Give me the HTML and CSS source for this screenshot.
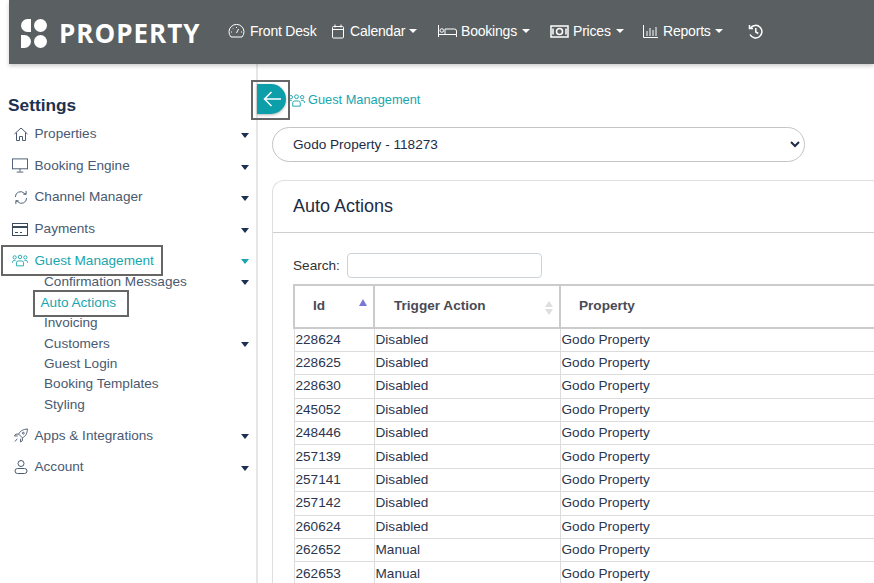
FILE: index.html
```html
<!DOCTYPE html>
<html lang="en">
<head>
<meta charset="utf-8">
<title>Auto Actions</title>
<link rel="stylesheet" href="styles.css">
</head>
<body>
<header class="topbar">
  <div class="brand">
    <svg class="logo" width="28" height="31" viewBox="0 0 28 31"><path fill="#fff" d="M11 1v13H7.500A6.500 6.500 0 0 1 7.500 1z"/><circle cx="20.500" cy="7.500" r="6.500" fill="#fff"/><path fill="#fff" d="M1 17h3.500a6.500 6.500 0 0 1 0 13H1z"/><circle cx="20.500" cy="23.500" r="6.500" fill="#fff"/></svg>
    <span class="brand-name">PROPERTY</span>
  </div>
  <nav class="mainnav">
    <a class="navlink nav-desk"><svg width="17" height="14" viewBox="0 0 17 14" fill="none" stroke="#fff"><path d="M3 13a7.500 7.500 0 1 1 11 0z"/><path d="M8.500 9l2-4M3 8h1M13 8h1M5 4.500l.6.6M8.500 3v1"/></svg>Front Desk</a>
    <a class="navlink nav-cal"><svg width="14" height="15" viewBox="0 0 14 15" fill="none" stroke="#fff"><rect x="1.500" y="2.500" width="11" height="11.500" rx="1"/><path d="M1.500 5.500h11M4 .5v3M10 .5v3"/></svg>Calendar<i class="caret"></i></a>
    <a class="navlink nav-book"><svg width="19" height="12" viewBox="0 0 19 12" fill="none" stroke="#fff"><path d="M.5 0v12M.5 9.500h18V12M18.500 9.500V6a2 2 0 0 0-2-2H7v5"/><circle cx="3.800" cy="5.500" r="1.800"/></svg>Bookings<i class="caret"></i></a>
    <a class="navlink nav-price"><svg width="19" height="13" viewBox="0 0 19 13" fill="none" stroke="#fff"><rect x="1" y="1" width="17" height="11" stroke-width="1.500"/><circle cx="9.500" cy="6.500" r="3" stroke-width="1.500"/><path d="M3 3.500v6M16 3.500v6" stroke-width="1.500"/></svg>Prices<i class="caret"></i></a>
    <a class="navlink nav-rep"><svg width="15" height="13" viewBox="0 0 15 13" fill="none" stroke="#fff"><path d="M.5 0v12.500H15M4 6v5M7 3v8M10 5v6M13 2v9"/></svg>Reports<i class="caret"></i></a>
    <svg class="history" width="15" height="15" viewBox="0 0 15 15" fill="none" stroke="#fff" stroke-width="1.500"><path d="M2.500 4A6.300 6.300 0 1 1 2 10.500"/><path d="M1.500 1v3.500H5M7.800 4v4l2.500 1.500"/></svg>
  </nav>
</header>

<div class="page">
  <aside class="sidebar">
    <h2 class="side-title">Settings</h2>
    <ul class="side-list">
      <li class="side-item"><svg class="side-icon" width="14" height="14" viewBox="0 0 14 14" fill="none" stroke="#4a5a70"><path d="M.5 7L7 1l6.500 6M2.500 5.500v8h3v-4h3v4h3v-8"/></svg><span class="side-label">Properties</span><i class="down"></i></li>
      <li class="side-item"><svg class="side-icon wide" width="17" height="15" viewBox="0 0 17 15" fill="none" stroke="#4a5a70"><rect x=".5" y=".5" width="16" height="10.500"/><path d="M8.500 11v3M5 14.500h7"/></svg><span class="side-label">Booking Engine</span><i class="down"></i></li>
      <li class="side-item"><svg class="side-icon" width="15" height="15" viewBox="0 0 15 15" fill="none" stroke="#4a5a70"><path d="M1.500 7A5.500 5.500 0 0 1 11 3l2 1M13.500 8A5.500 5.500 0 0 1 4 12l-2-1M13 .5V4H10M2 14.500V11h3"/></svg><span class="side-label">Channel Manager</span><i class="down"></i></li>
      <li class="side-item"><svg class="side-icon wide" width="16" height="13" viewBox="0 0 16 13" fill="none" stroke="#3c4a5e"><rect x=".5" y=".5" width="15" height="12"/><path d="M0 4h16" stroke-width="2"/><path d="M3 9.500h3M8 9.500h2"/></svg><span class="side-label">Payments</span><i class="down"></i></li>
      <li class="side-item active"><svg class="side-icon wide" width="18" height="13" viewBox="0 0 18 13" fill="none" stroke="#17a6ae"><circle cx="3" cy="3" r="1.800"/><circle cx="9" cy="2.500" r="2"/><circle cx="15" cy="3" r="1.800"/><path d="M5 12.500V9a2 2 0 0 1 2-2h4a2 2 0 0 1 2 2v3.500zM.5 9V8a2 2 0 0 1 2-1.500h1.500M17.500 9V8a2 2 0 0 0-2-1.500H14"/></svg><span class="side-label">Guest Management</span><i class="down"></i></li>
      <li class="sub-wrap">
        <ul class="sub-list">
          <li class="sub-item">Confirmation Messages<i class="down"></i></li>
          <li class="sub-item current">Auto Actions</li>
          <li class="sub-item">Invoicing</li>
          <li class="sub-item">Customers<i class="down"></i></li>
          <li class="sub-item">Guest Login</li>
          <li class="sub-item">Booking Templates</li>
          <li class="sub-item">Styling</li>
        </ul>
      </li>
      <li class="side-item"><svg class="side-icon" width="15" height="15" viewBox="0 0 15 15" fill="none" stroke="#4a5a70"><path d="M5 6c2-4 5-5 9.500-5.500C14 5 13 8 9 10L5 6zM5 6H2L.5 8H4M9 10v3l-2 1.500V11M3.500 11L1 14"/><circle cx="10" cy="5" r="1"/></svg><span class="side-label">Apps &amp; Integrations</span><i class="down"></i></li>
      <li class="side-item"><svg class="side-icon" width="13" height="14" viewBox="0 0 13 14" fill="none" stroke="#4a5a70"><circle cx="6.500" cy="3.500" r="3"/><rect x=".5" y="8.500" width="12" height="5" rx="2.500"/></svg><span class="side-label">Account</span><i class="down"></i></li>
    </ul>
    <span class="mark mark-guest"></span>
    <span class="mark mark-auto"></span>
  </aside>

  <main class="content">
    <div class="collapse"><svg width="18" height="16" viewBox="0 0 18 16" fill="none" stroke="#fff" stroke-width="1.500"><path d="M8.500 1L1.500 8l7 7M1.500 8H18"/></svg></div>
    <span class="mark mark-back"></span>
    <div class="crumb"><svg width="17" height="13" viewBox="0 0 18 13" fill="none" stroke="#17a6ae"><circle cx="3" cy="3" r="1.800"/><circle cx="9" cy="2.500" r="2"/><circle cx="15" cy="3" r="1.800"/><path d="M5 12.500V9a2 2 0 0 1 2-2h4a2 2 0 0 1 2 2v3.500zM.5 9V8a2 2 0 0 1 2-1.500h1.500M17.500 9V8a2 2 0 0 0-2-1.500H14"/></svg>Guest Management</div>
    <div class="picker">
      <span>Godo Property - 118273</span>
      <svg width="10" height="7" viewBox="0 0 10 7" fill="none" stroke="#1d2b45" stroke-width="2"><path d="M1 1l4 4 4-4"/></svg>
    </div>
    <section class="card">
      <h3 class="card-title">Auto Actions</h3>
      <div class="card-body">
        <div class="search"><label class="search-label" for="q">Search:</label><input class="search-input" id="q" type="text"></div>
        <table class="grid">
          <thead>
            <tr>
              <th class="col-id">Id<i class="sort-up"></i></th>
              <th class="col-trig">Trigger Action<i class="sort-both"></i></th>
              <th class="col-prop">Property</th>
            </tr>
          </thead>
          <tbody>
            <tr><td>228624</td><td>Disabled</td><td>Godo Property</td></tr>
            <tr><td>228625</td><td>Disabled</td><td>Godo Property</td></tr>
            <tr><td>228630</td><td>Disabled</td><td>Godo Property</td></tr>
            <tr><td>245052</td><td>Disabled</td><td>Godo Property</td></tr>
            <tr><td>248446</td><td>Disabled</td><td>Godo Property</td></tr>
            <tr><td>257139</td><td>Disabled</td><td>Godo Property</td></tr>
            <tr><td>257141</td><td>Disabled</td><td>Godo Property</td></tr>
            <tr><td>257142</td><td>Disabled</td><td>Godo Property</td></tr>
            <tr><td>260624</td><td>Disabled</td><td>Godo Property</td></tr>
            <tr><td>262652</td><td>Manual</td><td>Godo Property</td></tr>
            <tr><td>262653</td><td>Manual</td><td>Godo Property</td></tr>
          </tbody>
        </table>
      </div>
    </section>
  </main>
</div>
</body>
</html>
```
FILE: styles.css
```css
* { box-sizing: border-box; }
html, body { margin: 0; height: 100%; overflow: hidden; background: #fff; }
body { font-family: "Liberation Sans", Arial, sans-serif; font-size: 13.6px; color: #1d2b45; }
ul { list-style: none; margin: 0; padding: 0; }

.topbar { margin-left: 9px; height: 64px; background: #5a6061; display: flex; align-items: center; box-shadow: 0 2px 4px rgba(0,0,0,.2); position: relative; z-index: 2; }
.brand { display: flex; align-items: center; padding-left: 11px; width: 219px; }
.logo { display: block; margin-top: 2px; }
.brand-name { margin: 2px 0 0 11px; color: #fff; font-family: "Open Sans", sans-serif; font-weight: 700; font-size: 26px; letter-spacing: 1px; line-height: 1; }
.mainnav { display: flex; align-items: center; color: #fff; font-size: 14px; margin-top: -2px; }
.navlink { display: flex; align-items: center; gap: 5px; color: #fff; letter-spacing: -.2px; }
.nav-desk { width: 103px; }
.nav-cal { width: 107px; }
.nav-book { width: 112px; gap: 4px; }
.nav-book .caret, .nav-price .caret { margin-left: 1px; }
.nav-price { width: 93px; gap: 4px; }
.nav-rep { width: 105px; }
.caret { width: 0; height: 0; border: 4px solid transparent; border-top-color: #fff; border-bottom: 0; margin-left: -1px; }
.history { display: block; }

.page { display: flex; height: 519px; }
.sidebar { width: 258px; flex: none; border-right: 2px solid #e6e6e6; padding: 30px 0 0 8px; position: relative; }
.side-title { margin: 0 0 2px; font-size: 17.3px; line-height: 22px; font-weight: 700; color: #1d3050; }
.side-item { height: 31.6px; display: flex; align-items: center; position: relative; padding-left: 6px; color: #4a5a70; font-size: 13.6px; }
.side-icon { flex: none; width: 14px; margin-right: 6.500px; overflow: visible; margin-top: 1px; }
.side-icon.wide { margin-left: -2px; width: 16px; margin-right: 6.500px; }
.side-item.active { color: #17a6ae; }
.down { position: absolute; right: 7px; top: 15px; width: 0; height: 0; border: 4px solid transparent; border-top: 5px solid #1d3050; border-bottom: 0; }
.active .down { border-top-color: #17a6ae; }
.sub-wrap { margin-top: -3.500px; margin-bottom: 4px; }
.sub-item { position: relative; height: 20.4px; line-height: 20.4px; padding-left: 36px; color: #4a5a70; }
.sub-item .down { top: 8px; }
.sub-item.current { color: #17a6ae; padding-left: 32.500px; }
.mark { position: absolute; border: 2px solid #666; pointer-events: none; z-index: 3; }
.mark-guest { left: 1px; top: 181px; width: 162px; height: 31px; }
.mark-auto { left: 33px; top: 226px; width: 96px; height: 27px; }

.content { flex: 1; min-width: 0; padding: 0 0 0 14px; position: relative; }
.collapse { position: absolute; left: -1px; top: 20px; width: 29px; height: 30px; background: #0c9fa9; border-radius: 0 15px 15px 0; display: flex; align-items: center; justify-content: center; box-shadow: 0 1px 3px rgba(0,0,0,.3); }
.mark-back { left: -7px; top: 16px; width: 39px; height: 40px; }
.crumb { display: flex; align-items: center; gap: 3px; padding: 25px 0 0 16px; height: 47px; line-height: 18px; font-size: 12.8px; color: #17a6ae; }
.picker { width: 533px; height: 35px; margin-top: 16px; border: 1px solid #c4c4c4; border-radius: 18px; display: flex; align-items: center; justify-content: space-between; padding: 0 4px 1px 20px; font-size: 13.6px; color: #1d2b45; }
.card { margin-top: 18px; border: 1px solid #dfdfdf; border-radius: 12px 0 0 0; border-right: 0; }
.card-title { margin: 0; height: 52px; line-height: 50px; padding-left: 20px; font-size: 18px; font-weight: 400; color: #1d2b45; border-bottom: 1px solid #cfcfcf; }
.card-body { padding: 20px 0 0 20px; overflow: hidden; }
.search { display: flex; align-items: center; height: 25px; color: #333; font-size: 13.6px; }
.search-label { width: 54px; margin-top: -1px; }
.search-input { width: 195px; height: 25px; border: 1px solid #cdd3da; border-radius: 4px; background: #fff; padding: 0; }
.grid { margin-top: 6px; border-collapse: collapse; table-layout: fixed; width: 620px; font-size: 13.6px; }
.grid th { position: relative; height: 43px; border: 2px solid #cbcbcb; text-align: left; color: #4a4a55; font-size: 13.6px; font-weight: 700; padding: 0 0 3px 18px; }
.grid th.col-trig { padding-left: 19px; }
.grid th.col-prop { padding-left: 18px; }
.col-id { width: 80px; }
.col-trig { width: 186px; }
.grid td { height: 23.4px; padding: 0 1px 1px; border: 1px solid #dcdcdc; color: #2a3550; line-height: 19px; vertical-align: middle; }
.sort-up { position: absolute; right: 6px; top: 13px; width: 0; height: 0; border: 4px solid transparent; border-bottom: 7px solid #7a78d6; border-top: 0; }
.sort-both { position: absolute; right: 6px; top: 15px; width: 8px; height: 16px; }
.sort-both::before, .sort-both::after { content: ""; position: absolute; left: 0; width: 0; height: 0; border: 4px solid transparent; }
.sort-both::before { top: 0; border-bottom: 6px solid #dedede; border-top: 0; }
.sort-both::after { top: 8px; border-top: 6px solid #dedede; border-bottom: 0; }
```
